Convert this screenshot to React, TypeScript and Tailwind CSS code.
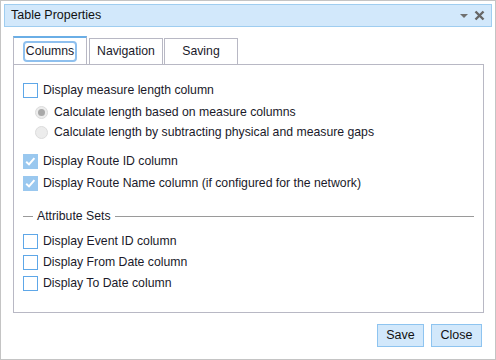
import React from "react";

function Check({ checked }: { checked?: boolean }) {
  return (
    <svg width="15" height="15" viewBox="0 0 15 15" className="shrink-0">
      {checked ? (
        <>
          <rect x="0" y="0" width="15" height="15" fill="#9ac8ef" />
          <path d="M3.2 7.8 L6 10.4 L11.4 4.2" fill="none" stroke="#ffffff" strokeWidth="2" />
        </>
      ) : (
        <rect x="0.5" y="0.5" width="14" height="14" fill="#ffffff" stroke="#5ea7e8" strokeWidth="1" />
      )}
    </svg>
  );
}

function Radio({ checked }: { checked?: boolean }) {
  return (
    <span className="flex h-[13px] w-[13px] shrink-0 items-center justify-center rounded-full border border-[#dcdcdc] bg-[#ececec]">
      {checked && <span className="h-[7px] w-[7px] rounded-full bg-[#a9a9a9]" />}
    </span>
  );
}

function CheckRow({ label, checked, tall }: { label: string; checked?: boolean; tall?: boolean }) {
  return (
    <div className={tall ? "flex h-[22px] items-center gap-[5px]" : "flex h-[21px] items-center gap-[5px]"}>
      <Check checked={checked} />
      <span>{label}</span>
    </div>
  );
}

function RadioRow({ label, checked }: { label: string; checked?: boolean }) {
  return (
    <div className="flex h-[20px] items-center gap-[6px] pl-[12px]">
      <Radio checked={checked} />
      <span>{label}</span>
    </div>
  );
}

export default function App() {
  return (
    <div
      className="relative h-[360px] w-[496px] border border-[#c4c4c4] bg-white text-[12.25px] text-[#1a1a2a]"
      style={{ fontFamily: '"Liberation Sans", Arial, sans-serif' }}
    >
      <div className="mx-[3px] mt-[3px] flex h-[23px] items-center justify-between border border-[#9fcdf0] bg-[#d2e8fb] pl-[6px] pr-[6px]">
        <span className="text-[12.5px] text-[#111]">Table Properties</span>
        <div className="flex items-center gap-[6px]">
          <svg width="8" height="6" viewBox="0 0 8 6">
            <path d="M0 1 L8 1 L4 5 Z" fill="#707070" />
          </svg>
          <svg width="11" height="11" viewBox="0 0 11 11">
            <path d="M1.5 1.5 L9.5 9.5 M9.5 1.5 L1.5 9.5" stroke="#666" strokeWidth="2.4" />
          </svg>
        </div>
      </div>

      <div className="ml-[12px] mr-[11px] mt-[9px]">
        <div className="flex items-end">
          <div className="flex h-[28px] w-[74px] items-center justify-center border-x border-t-2 border-x-[#b8b8c4] border-t-[#6aaee6] bg-white">
            <span className="rounded-[2px] px-[1px] leading-[17px] outline outline-2 outline-[#8fc0ee]">Columns</span>
          </div>
          <div className="ml-[2px] flex h-[26px] w-[74px] items-center justify-center border border-b-0 border-[#b8b8c4] bg-white">
            Navigation
          </div>
          <div className="ml-[1px] flex h-[26px] w-[74px] items-center justify-center border border-b-0 border-[#b8b8c4] bg-white">
            Saving
          </div>
        </div>
        <div className="h-[249px] border border-[#b8b8c4] px-[9px] pt-[15px]">
          <CheckRow label="Display measure length column" />
          <div className="mt-[1px]">
            <RadioRow label="Calculate length based on measure columns" checked />
            <RadioRow label="Calculate length by subtracting physical and measure gaps" />
          </div>
          <div className="mt-[9px]">
            <CheckRow label="Display Route ID column" checked />
            <CheckRow label="Display Route Name column (if configured for the network)" checked tall />
          </div>
          <div className="mt-[14px] flex h-[16px] items-center">
            <span className="h-px w-[10px] bg-[#9a9a9a]" />
            <span className="px-[4px]">Attribute Sets</span>
            <span className="h-px flex-1 bg-[#9a9a9a]" />
          </div>
          <div className="mt-[7px]">
            <CheckRow label="Display Event ID column" />
            <CheckRow label="Display From Date column" />
            <CheckRow label="Display To Date column" />
          </div>
        </div>
      </div>

      <div className="mr-[13px] mt-[11px] flex justify-end gap-[7px]">
        <button className="h-[23px] w-[47px] border border-[#8ec4f0] bg-[#d2e8fb] text-[12.5px] text-[#111]">Save</button>
        <button className="h-[23px] w-[51px] border border-[#8ec4f0] bg-[#d2e8fb] text-[12.5px] text-[#111]">Close</button>
      </div>
    </div>
  );
}
